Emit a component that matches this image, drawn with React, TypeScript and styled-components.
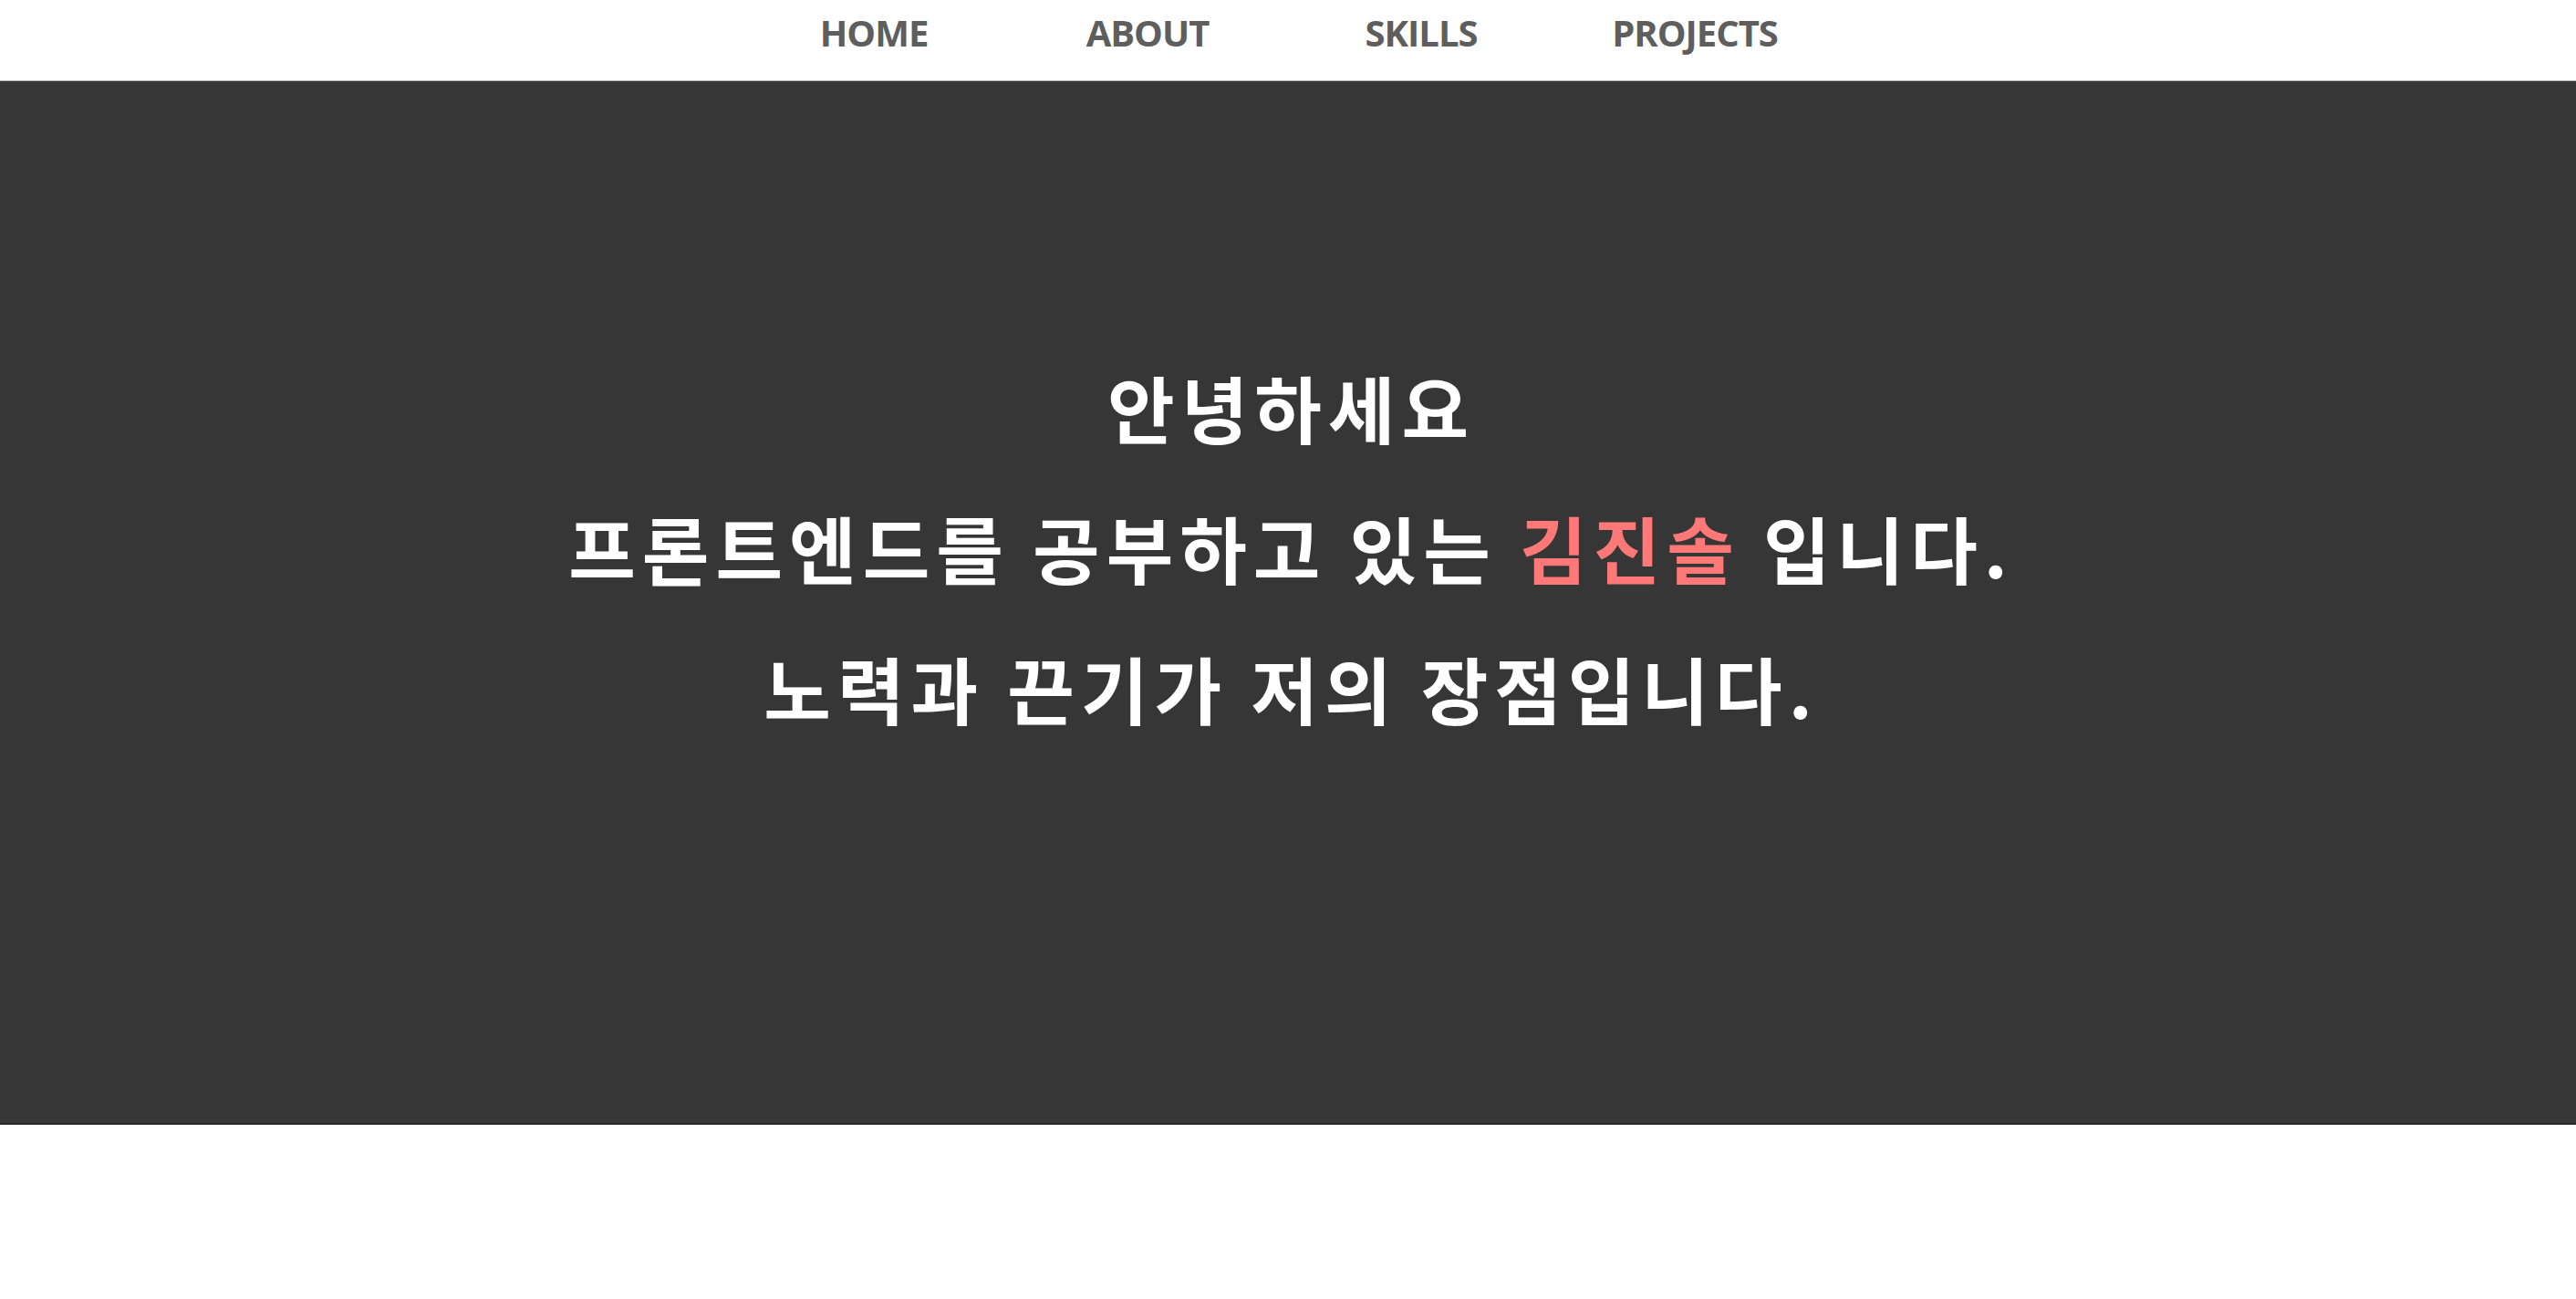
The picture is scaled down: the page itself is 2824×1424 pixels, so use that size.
import React from "react";
import styled, { createGlobalStyle } from "styled-components";

const GlobalStyle = createGlobalStyle`
  html, body {
    margin: 0;
    padding: 0;
    background: #ffffff;
  }
  body {
    font-family: "Open Sans", "Noto Sans CJK KR", sans-serif;
  }
  * { box-sizing: border-box; }
`;

const Page = styled.div`
  width: 100%;
  min-height: 1424px;
  background: #ffffff;
`;

const NavBar = styled.nav`
  height: 89px;
  background: #ffffff;
  border-bottom: 1px solid #b8b8b8;
  display: flex;
  justify-content: center;
  padding-right: 8px;
`;

const NavList = styled.ul`
  display: flex;
  margin: 0;
  padding: 0;
  list-style: none;
`;

const NavItem = styled.li`
  width: 300px;
  padding-top: 8px;
  text-align: center;
  font-family: "Open Sans", "Noto Sans", sans-serif;
  font-weight: 700;
  font-size: 40px;
  line-height: 56px;
  color: #5e5e5e;
  letter-spacing: -1px;
`;

const Hero = styled.section`
  height: 1144px;
  background: #363636;
  border-bottom: 2px solid #2a2a2a;
  padding-top: 279px;
  padding-left: 7px;
  text-align: center;
`;

const Line = styled.p`
  margin: 0;
  font-family: "Noto Sans CJK KR", "Noto Sans", sans-serif;
  font-weight: 700;
  font-size: 80px;
  line-height: 154px;
  letter-spacing: 7px;
  color: #ffffff;
`;

const Name = styled.span`
  color: #ff7878;
`;

const navItems = ["HOME", "ABOUT", "SKILLS", "PROJECTS"];

export default function App() {
  return (
    <Page>
      <GlobalStyle />
      <NavBar>
        <NavList>
          {navItems.map((item) => (
            <NavItem key={item}>{item}</NavItem>
          ))}
        </NavList>
      </NavBar>
      <Hero>
        <Line>안녕하세요</Line>
        <Line>
          프론트엔드를 공부하고 있는 <Name>김진솔</Name> 입니다.
        </Line>
        <Line>노력과 끈기가 저의 장점입니다.</Line>
      </Hero>
    </Page>
  );
}
